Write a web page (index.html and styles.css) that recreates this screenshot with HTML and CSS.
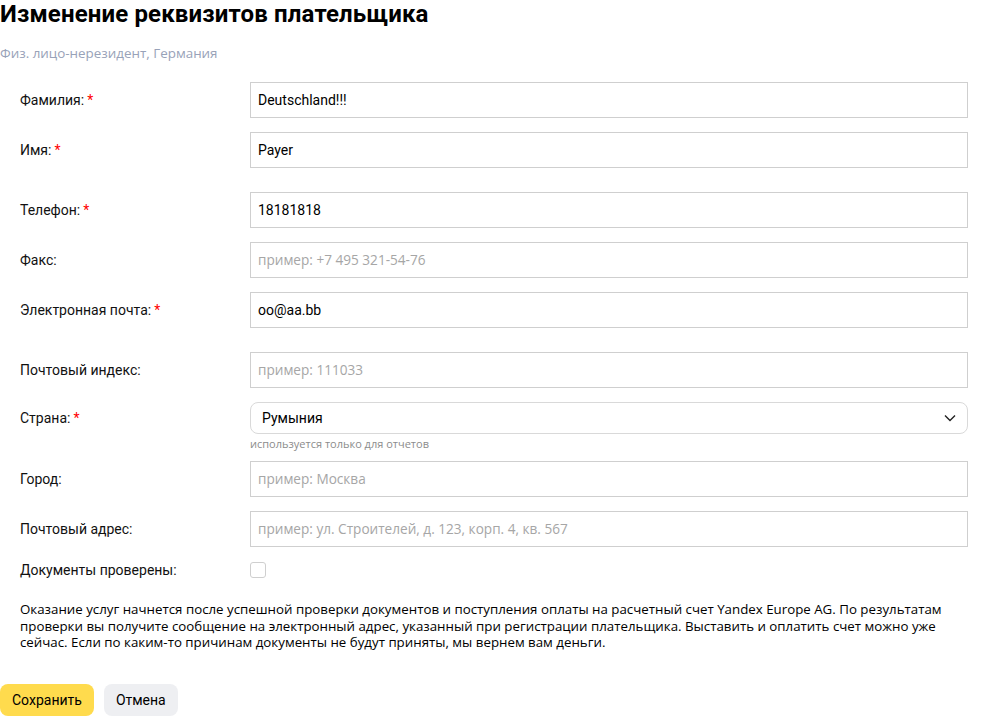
FILE: index.html
```html
<!DOCTYPE html>
<html lang="ru">
<head>
<meta charset="utf-8">
<link rel="stylesheet" href="styles.css">
</head>
<body>
<div class="page">
  <h1 class="title">Изменение реквизитов плательщика</h1>
  <div class="subtitle">Физ. лицо-нерезидент, Германия</div>

  <form class="form">
    <div class="group">
      <div class="row">
        <label class="label">Фамилия:<span class="req">*</span></label>
        <div class="field"><input class="input" type="text" value="Deutschland!!!"></div>
      </div>
      <div class="row">
        <label class="label">Имя:<span class="req">*</span></label>
        <div class="field"><input class="input" type="text" value="Payer"></div>
      </div>
    </div>

    <div class="group">
      <div class="row">
        <label class="label">Телефон:<span class="req">*</span></label>
        <div class="field"><input class="input" type="text" value="18181818"></div>
      </div>
      <div class="row">
        <label class="label">Факс:</label>
        <div class="field"><input class="input" type="text" placeholder="пример: +7 495 321-54-76"></div>
      </div>
      <div class="row">
        <label class="label">Электронная почта:<span class="req">*</span></label>
        <div class="field"><input class="input" type="text" value="oo@aa.bb"></div>
      </div>
    </div>

    <div class="group">
      <div class="row">
        <label class="label">Почтовый индекс:</label>
        <div class="field"><input class="input" type="text" placeholder="пример: 111033"></div>
      </div>
      <div class="row row-select">
        <label class="label label-select">Страна:<span class="req">*</span></label>
        <div class="field">
          <div class="select">
            <span class="select-value">Румыния</span>
            <svg class="chevron" width="12" height="8" viewBox="0 0 12 8"><path d="M1 1.5 L6 6.5 L11 1.5" fill="none" stroke="#222" stroke-width="1.4"/></svg>
          </div>
          <div class="hint">используется только для отчетов</div>
        </div>
      </div>
      <div class="row">
        <label class="label">Город:</label>
        <div class="field"><input class="input" type="text" placeholder="пример: Москва"></div>
      </div>
      <div class="row">
        <label class="label">Почтовый адрес:</label>
        <div class="field"><input class="input" type="text" placeholder="пример: ул. Строителей, д. 123, корп. 4, кв. 567"></div>
      </div>
      <div class="row row-check">
        <label class="label">Документы проверены:</label>
        <div class="field"><span class="checkbox"></span></div>
      </div>
    </div>

    <p class="note">Оказание услуг начнется после успешной проверки документов и поступления оплаты на расчетный счет Yandex Europe AG. По результатам проверки вы получите сообщение на электронный адрес, указанный при регистрации плательщика. Выставить и оплатить счет можно уже сейчас. Если по каким-то причинам документы не будут приняты, мы вернем вам деньги.</p>

    <div class="actions">
      <button type="button" class="btn btn-primary">Сохранить</button>
      <button type="button" class="btn btn-secondary">Отмена</button>
    </div>
  </form>
</div>
</body>
</html>
```

FILE: styles.css
```css
* { box-sizing: border-box; }

html, body {
  margin: 0;
  padding: 0;
  background: #fff;
}

body {
  font-family: Roboto, "Liberation Sans", Arial, sans-serif;
  color: #000;
}

.page {
  width: 1000px;
}

.title {
  margin: 0;
  font-family: Roboto, "Liberation Sans", sans-serif;
  font-weight: 700;
  font-size: 24px;
  line-height: 28px;
  letter-spacing: 0.15px;
}

.subtitle {
  margin-top: 16px;
  font-family: "Open Sans", sans-serif;
  font-size: 13.4px;
  line-height: 18px;
  color: #98a2b8;
}

.form {
  margin-top: 20px;
  width: 968px;
}

.group {
  display: flex;
  flex-direction: column;
  gap: 14px;
  margin-bottom: 24px;
}

.row {
  display: flex;
  align-items: center;
}

.label {
  width: 250px;
  flex: none;
  padding-left: 20px;
  font-size: 14px;
  line-height: 18px;
  color: #111;
}

.req {
  color: #ff0000;
  margin-left: 3px;
}

.field {
  flex: 1;
}

.input {
  display: block;
  width: 100%;
  height: 36px;
  margin: 0;
  padding: 0 7px;
  border: 1px solid #cfcfcf;
  border-radius: 0;
  font-family: Roboto, "Liberation Sans", sans-serif;
  font-size: 14px;
  color: #000;
  outline: none;
  background: #fff;
}

.input::placeholder {
  font-family: "Open Sans", sans-serif;
  font-size: 13.6px;
  color: #a6a6a6;
}

.row-select {
  align-items: flex-start;
}

.label-select {
  padding-top: 7px;
}

.select {
  display: flex;
  align-items: center;
  justify-content: space-between;
  height: 32px;
  padding: 0 11px 0 11px;
  border: 1px solid #d9d9d9;
  border-radius: 8px;
  font-family: Roboto, "Liberation Sans", sans-serif;
  font-size: 14px;
}

.chevron {
  display: block;
}

.hint {
  margin-top: 3px;
  margin-bottom: -4px;
  font-family: "Open Sans", sans-serif;
  font-size: 11px;
  line-height: 14px;
  color: #8c8c8c;
}

.checkbox {
  display: block;
  width: 16px;
  height: 16px;
  border: 1px solid #cfcfcf;
  border-radius: 3px;
  background: #fff;
}

.note {
  margin: -2px 0 0 20px;
  width: 948px;
  font-family: "Open Sans", sans-serif;
  font-size: 13.3px;
  line-height: 16.5px;
  color: #000;
}

.actions {
  display: flex;
  gap: 10px;
  margin-top: 33px;
}

.btn {
  height: 32px;
  border: none;
  border-radius: 8px;
  padding: 0 12px;
  font-family: Roboto, "Liberation Sans", sans-serif;
  font-size: 14px;
  color: #000;
  cursor: pointer;
}

.btn-primary {
  background: #ffdb4d;
}

.btn-secondary {
  background: #eeeff2;
}
```
